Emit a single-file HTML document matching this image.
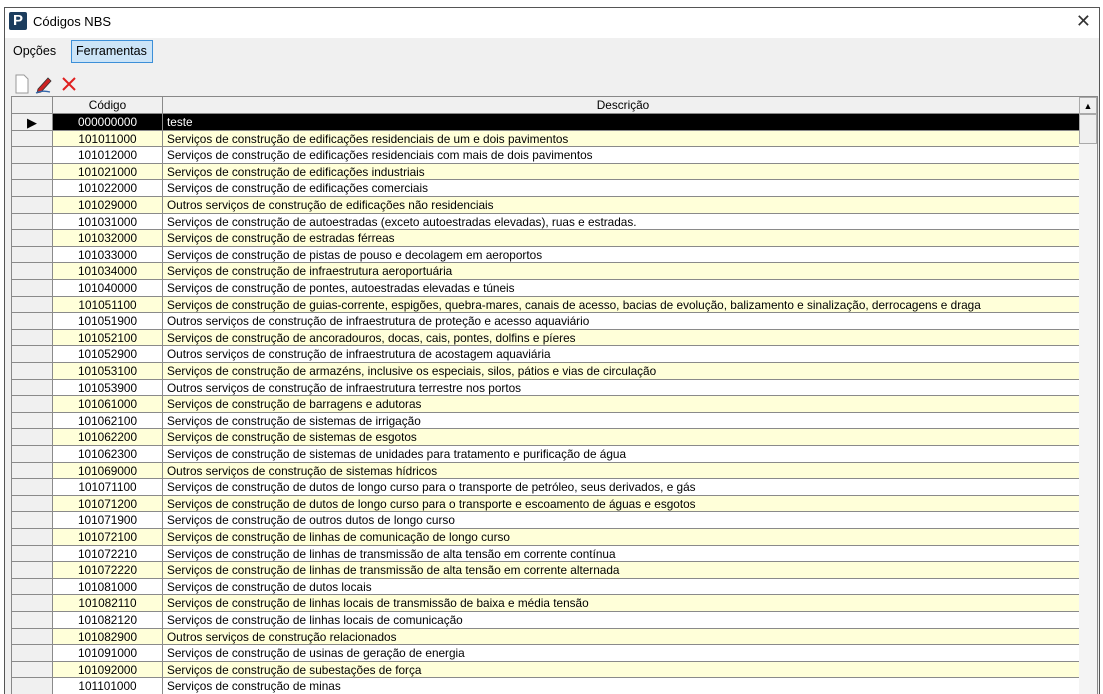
<!DOCTYPE html>
<html><head><meta charset="utf-8"><style>
*{margin:0;padding:0;box-sizing:border-box}
html,body{width:1103px;height:694px;overflow:hidden}
body{background:#fff;font-family:"Liberation Sans",sans-serif;position:relative}
.win{position:absolute;left:4px;top:7px;width:1096px;height:687px;border:1px solid #555;border-bottom:none;background:#f0f0f0}
.title{position:absolute;left:0;top:0;width:100%;height:30px;background:#fff;font-size:13px}
.grid{position:absolute;left:11px;top:96px;width:1087px;height:598px;border:1px solid #888;border-bottom:none;background:#fff;overflow:hidden}
.r{position:absolute;left:0;width:1067px;height:16.6px;font-size:11.8px;line-height:17px;border-bottom:1px solid #8a8a8a}
.r div{position:absolute;top:0;height:100%;white-space:nowrap;overflow:hidden}
.i{left:0;width:41px;background:#f0f0f0;border-right:1px solid #8a8a8a}
.c{left:41px;width:110px;text-align:center;border-right:1px solid #8a8a8a}
.d{left:151px;width:916px;padding-left:4px}
.y .c,.y .d{background:#ffffd9}
</style></head><body>
<div class="win">
<div class="title">
<div style="position:absolute;left:4px;top:4px;width:18px;height:18px;background:#1c3d5e;border-radius:2px;color:#fff;font-weight:bold;font-size:15px;line-height:18px;text-align:center">P</div>
<div style="position:absolute;left:28px;top:6px">Códigos NBS</div>
<div style="position:absolute;right:8px;top:3px;font-size:18px;color:#333">✕</div>
</div>
<div style="position:absolute;left:8px;top:36px;font-size:12.5px">Opções</div>
<div style="position:absolute;left:66px;top:32px;width:82px;height:23px;background:#cce4f7;border:1px solid #3c8fd8;font-size:12.5px;padding:3px 0 0 4px">Ferramentas</div>
<svg style="position:absolute;left:9px;top:65px" width="70" height="22">
<path d="M2 2h8l4 4v14H2z" fill="#fff" stroke="#999"/>
<path d="M24 16l10-11 3 3-10 11-4 1z" fill="#c22" stroke="#333" stroke-width="0.8"/>
<path d="M22 20q6 -3 14 -1" stroke="#36a" fill="none" stroke-width="1.3"/>
<path d="M49 5l12 12M61 5L49 17" stroke="#e02020" stroke-width="2"/>
</svg>
</div>
<div class="grid">
<div class="r" style="top:0;height:17px;background:#f0f0f0"><div class="i"></div><div class="c" style="background:#f0f0f0">Código</div><div class="d" style="text-align:center;background:#f0f0f0">Descrição</div></div>
<div style="position:absolute;left:1067px;top:0;width:18px;height:17px;background:#f0f0f0;border:1px solid #aaa;font-size:9px;text-align:center;line-height:16px">▲</div>
<div style="position:absolute;left:1067px;top:17px;width:18px;height:581px;background:#f4f4f4"></div>
<div style="position:absolute;left:1067px;top:17px;width:18px;height:30px;background:#efefef;border:1px solid #aaa"></div>
<div id="rows"></div>
</div>
<script>
var d=[["000000000","teste"],["101011000","Serviços de construção de edificações residenciais de um e dois pavimentos"],["101012000","Serviços de construção de edificações residenciais com mais de dois pavimentos"],["101021000","Serviços de construção de edificações industriais"],["101022000","Serviços de construção de edificações comerciais"],["101029000","Outros serviços de construção de edificações não residenciais"],["101031000","Serviços de construção de autoestradas (exceto autoestradas elevadas), ruas e estradas."],["101032000","Serviços de construção de estradas férreas"],["101033000","Serviços de construção de pistas de pouso e decolagem em aeroportos"],["101034000","Serviços de construção de infraestrutura aeroportuária"],["101040000","Serviços de construção de pontes, autoestradas elevadas e túneis"],["101051100","Serviços de construção de guias-corrente, espigões, quebra-mares, canais de acesso, bacias de evolução, balizamento e sinalização, derrocagens e draga"],["101051900","Outros serviços de construção de infraestrutura de proteção e acesso aquaviário"],["101052100","Serviços de construção de ancoradouros, docas, cais, pontes, dolfins e píeres"],["101052900","Outros serviços de construção de infraestrutura de acostagem aquaviária"],["101053100","Serviços de construção de armazéns, inclusive os especiais, silos, pátios e vias de circulação"],["101053900","Outros serviços de construção de infraestrutura terrestre nos portos"],["101061000","Serviços de construção de barragens e adutoras"],["101062100","Serviços de construção de sistemas de irrigação"],["101062200","Serviços de construção de sistemas de esgotos"],["101062300","Serviços de construção de sistemas de unidades para tratamento e purificação de água"],["101069000","Outros serviços de construção de sistemas hídricos"],["101071100","Serviços de construção de dutos de longo curso para o transporte de petróleo, seus derivados, e gás"],["101071200","Serviços de construção de dutos de longo curso para o transporte e escoamento de águas e esgotos"],["101071900","Serviços de construção de outros dutos de longo curso"],["101072100","Serviços de construção de linhas de comunicação de longo curso"],["101072210","Serviços de construção de linhas de transmissão de alta tensão em corrente contínua"],["101072220","Serviços de construção de linhas de transmissão de alta tensão em corrente alternada"],["101081000","Serviços de construção de dutos locais"],["101082110","Serviços de construção de linhas locais de transmissão de baixa e média tensão"],["101082120","Serviços de construção de linhas locais de comunicação"],["101082900","Outros serviços de construção relacionados"],["101091000","Serviços de construção de usinas de geração de energia"],["101092000","Serviços de construção de subestações de força"],["101101000","Serviços de construção de minas"],["101102000","Serviços de construção"]];
var h="";d.forEach(function(r,i){var t=17+i*16.6;
if(i==0)h+='<div class="r" style="top:'+t+'px;background:#000;color:#fff"><div class="i" style="text-align:center;color:#000;font-size:13px">▶</div><div class="c" style="background:#000">'+r[0]+'</div><div class="d">'+r[1]+'</div></div>';
else h+='<div class="r'+(i%2?' y':'')+'" style="top:'+t+'px"><div class="i"></div><div class="c">'+r[0]+'</div><div class="d">'+r[1]+'</div></div>';});
document.getElementById("rows").innerHTML=h;
</script>
</body></html>
